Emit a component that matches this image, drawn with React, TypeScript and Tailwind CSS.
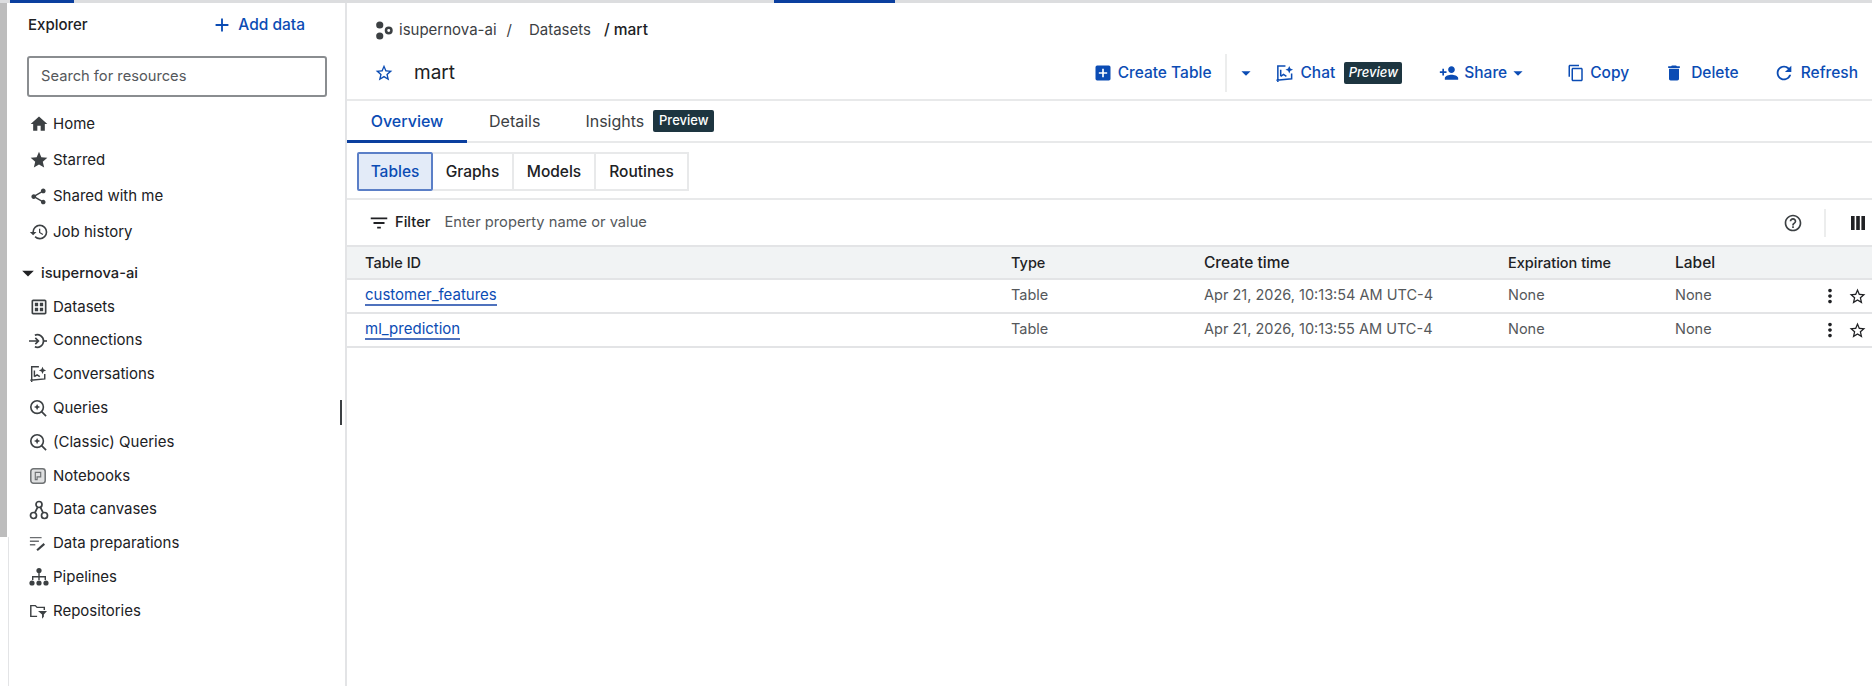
import {
    MdAdd,
    MdAddBox,
    MdArrowDropDown,
    MdContentCopy,
    MdDelete,
    MdFilterList,
    MdHelpOutline,
    MdHome,
    MdHistory,
    MdMoreVert,
    MdOutlineDataset,
    MdPersonAdd,
    MdRefresh,
    MdShare,
    MdStar,
    MdStarBorder,
} from "react-icons/md";
import type { ReactNode } from "react";

const FONT = "font-['Inter','Roboto','Liberation_Sans',sans-serif]";

function ConnectionsIcon() {
    return (
        <svg viewBox="0 0 20 20" className="h-[18px] w-[18px]" fill="none" stroke="currentColor" strokeWidth="1.8">
            <path d="M0 10h10M7 6.5l3.5 3.5L7 13.5" />
            <path d="M6.5 3.5a7 7 0 1 1 0 13" />
            <path d="M16 10h4" />
        </svg>
    );
}

function ConversationsIcon({ className = "h-[18px] w-[18px]" }: { className?: string }) {
    return (
        <svg viewBox="0 0 20 20" className={className} fill="none" stroke="currentColor" strokeWidth="1.6">
            <path d="M3 19V2h8M1.5 17l16-1.5V10M6 13V6M6 13l3-2 3 2" />
            <path d="M15 2l1.2 2.8L19 6l-2.8 1.2L15 10l-1.2-2.8L11 6l2.8-1.2z" fill="currentColor" stroke="none" />
        </svg>
    );
}

function QueryIcon() {
    return (
        <svg viewBox="0 0 20 20" className="h-[18px] w-[18px]" fill="none" stroke="currentColor" strokeWidth="1.8">
            <circle cx="9" cy="9" r="7" />
            <path d="M14 14l5 5" />
            <path d="M9 5.5l1.1 2.4L12.5 9l-2.4 1.1L9 12.5l-1.1-2.4L5.5 9l2.4-1.1z" fill="currentColor" stroke="none" />
        </svg>
    );
}

function NotebookIcon() {
    return (
        <svg viewBox="0 0 20 20" className="h-[18px] w-[18px] text-[#6f7274]" fill="none" stroke="currentColor" strokeWidth="1.7">
            <rect x="2" y="2" width="16" height="16" rx="3" fill="#dfe0e1" />
            <path d="M7 6h6v5H9v3H7z" strokeWidth="1.3" />
        </svg>
    );
}

function CanvasIcon() {
    return (
        <svg viewBox="0 0 20 20" className="h-[20px] w-[20px]" fill="none" stroke="currentColor" strokeWidth="1.7">
            <circle cx="10" cy="4.5" r="3" />
            <circle cx="4.5" cy="15.5" r="3" />
            <circle cx="15.5" cy="15.5" r="3" />
            <path d="M8.5 7.5L6 12.5M11.5 7.5l2.5 5" />
        </svg>
    );
}

function PreparationIcon() {
    return (
        <svg viewBox="0 0 20 20" className="h-[18px] w-[18px]" fill="none" stroke="currentColor" strokeWidth="1.6">
            <path d="M1 4h13M1 8h10M1 12h6" stroke="#6b6e71" />
            <path d="M9 18l8-7" strokeWidth="2.4" />
        </svg>
    );
}

function PipelineIcon() {
    return (
        <svg viewBox="0 0 20 20" className="h-[20px] w-[20px]" fill="currentColor">
            <circle cx="10" cy="3.5" r="2.6" />
            <circle cx="3" cy="16" r="2.6" />
            <circle cx="10" cy="16" r="2.6" />
            <circle cx="17" cy="16" r="2.6" />
            <path d="M9.3 5h1.4v4H17v4h-1.4v-2.6h-4.9V13H9.3v-2.6H4.4V13H3V9h6.3z" />
        </svg>
    );
}

function RepositoryIcon() {
    return (
        <svg viewBox="0 0 20 20" className="h-[18px] w-[18px]" fill="none" stroke="currentColor" strokeWidth="1.6">
            <path d="M9 16H2V4h5l2 2h8v3" />
            <path d="M10 10h10l-3.5 4v2.5l-2 2V14z" fill="currentColor" stroke="none" />
        </svg>
    );
}

function OrgIcon() {
    return (
        <svg viewBox="0 0 18 18" className="h-[19px] w-[19px] text-[#3c4043]" fill="currentColor">
            <circle cx="4.5" cy="3.8" r="3.4" />
            <circle cx="4.5" cy="14.2" r="3.4" />
            <path d="M13 5.2a3.8 3.8 0 1 0 0 7.6 3.8 3.8 0 0 0 0-7.6zm0 2.4a1.4 1.4 0 1 1 0 2.8 1.4 1.4 0 0 1 0-2.8z" />
        </svg>
    );
}

function ColumnsIcon() {
    return (
        <svg viewBox="0 0 14 14" className="h-[14px] w-[14px] text-[#202124]" fill="currentColor">
            <rect x="0" y="0" width="3.6" height="14" />
            <rect x="5.2" y="0" width="3.6" height="14" />
            <rect x="10.4" y="0" width="3.6" height="14" />
        </svg>
    );
}

function PreviewBadge({ className }: { className: string }) {
    return (
        <span className={`flex items-center justify-center rounded-[2px] bg-[#1d3540] text-[13px] font-medium text-white ${className}`}>
            Preview
        </span>
    );
}

function NavItem({ icon, label, h = "h-[33.8px]" }: { icon: ReactNode; label: string; h?: string }) {
    return (
        <div className={`flex items-center pl-[20px] text-[#202124] ${h}`}>
            <span className="flex w-[24px] shrink-0 items-center text-[#3c4043]">{icon}</span>
            <span className="text-[15px]">{label}</span>
        </div>
    );
}

function ActionButton({ icon, label, className }: { icon: ReactNode; label: string; className: string }) {
    return (
        <div className={`flex items-center text-[15.5px] font-medium text-[#0b4cb4] ${className}`}>
            {icon}
            <span>{label}</span>
        </div>
    );
}

const GRID = "grid grid-cols-[646px_193px_304px_167px_1fr_60px]";

function Row({ id, time }: { id: string; time: string }) {
    return (
        <div className={`${GRID} h-[34px] items-center border-b-2 border-[#e3e4e6] pb-[2px] pl-[18px] text-[14.5px] text-[#55585b]`}>
            <span>
                <span className="border-b-2 border-[#4f72bd] text-[15px] text-[#0b4cb4]">{id}</span>
            </span>
            <span>Table</span>
            <span>{time}</span>
            <span>None</span>
            <span>None</span>
            <span className="flex items-center justify-end gap-[7px] pr-[5px] pt-[2px] text-[#202124]">
                <MdMoreVert className="h-[22px] w-[22px]" />
                <MdStarBorder className="h-[19px] w-[19px]" />
            </span>
        </div>
    );
}

export default function App() {
    return (
        <div className={`${FONT} flex h-[686px] w-[1872px] flex-col overflow-hidden bg-white`}>
            {/* top strip with the two blue tab markers */}
            <div className="flex h-[3px] shrink-0 bg-[#dcdddf]">
                <div className="ml-[10px] w-[64px] bg-[#0b3f9f]" />
                <div className="ml-[700px] w-[121px] bg-[#0b3f9f]" />
            </div>

            <div className="flex min-h-0 flex-1">
                <div className="flex w-[9px] shrink-0 flex-col">
                    <div className="h-[534px] w-[7px] bg-[#bdbdbd]" />
                    <div className="flex-1 border-r border-[#e3e4e6]" />
                </div>

                <aside className="relative w-[338px] shrink-0 border-r-2 border-[#e3e4e6]">
                    <div className="flex h-[44px] items-center justify-between pl-[19px] pr-[40px]">
                        <span className="text-[15px] font-medium text-[#202124]">Explorer</span>
                        <span className="flex items-center text-[15.5px] font-medium text-[#0b4cb4]">
                            <MdAdd className="mr-[5px] h-[22px] w-[22px]" />
                            Add data
                        </span>
                    </div>
                    <div className="ml-[18px] mt-[9px] flex h-[41px] w-[300px] items-center rounded-[3px] border-2 border-[#8a8d90] pb-[1px] pl-[12px] text-[14.7px] text-[#55585b]">
                        Search for resources
                    </div>
                    <div className="mt-[9px]">
                        <NavItem h="h-[36px]" icon={<MdHome className="h-[20px] w-[20px]" />} label="Home" />
                        <NavItem h="h-[36px]" icon={<MdStar className="h-[20px] w-[20px]" />} label="Starred" />
                        <NavItem h="h-[36px]" icon={<MdShare className="h-[19px] w-[19px]" />} label="Shared with me" />
                        <NavItem h="h-[36px]" icon={<MdHistory className="h-[20px] w-[20px]" />} label="Job history" />
                    </div>
                    <div className="mt-[6px] flex h-[34px] items-center pl-[10px] text-[14.7px] font-medium text-[#202124]">
                        <MdArrowDropDown className="mr-[-1px] h-[28px] w-[28px] -ml-[5px]" />
                        isupernova-ai
                    </div>
                    <div>
                        <NavItem icon={<MdOutlineDataset className="h-[20px] w-[20px]" />} label="Datasets" />
                        <NavItem icon={<ConnectionsIcon />} label="Connections" />
                        <NavItem icon={<ConversationsIcon />} label="Conversations" />
                        <NavItem icon={<QueryIcon />} label="Queries" />
                        <NavItem icon={<QueryIcon />} label="(Classic) Queries" />
                        <NavItem icon={<NotebookIcon />} label="Notebooks" />
                        <NavItem icon={<CanvasIcon />} label="Data canvases" />
                        <NavItem icon={<PreparationIcon />} label="Data preparations" />
                        <NavItem icon={<PipelineIcon />} label="Pipelines" />
                        <NavItem icon={<RepositoryIcon />} label="Repositories" />
                    </div>
                    {/* resize handle */}
                    <div className="absolute right-[3px] top-[397px] h-[25px] w-[2px] bg-[#3c4043]" />
                </aside>

                <main className="min-w-0 flex-1">
                    <div className="flex h-[98px] flex-col border-b-2 border-[#e8e9ea]">
                        <div className="flex h-[54px] shrink-0 items-center pl-[28px] text-[15px] text-[#3c4043]">
                            <OrgIcon />
                            <span className="ml-[5px]">isupernova-ai</span>
                            <span className="ml-[10px]">/</span>
                            <span className="ml-[17px]">Datasets</span>
                            <span className="ml-[13px] text-[15.5px] font-medium text-[#202124]">/ mart</span>
                        </div>
                        <div className="flex flex-1 items-center pb-[10px]">
                            <MdStarBorder className="ml-[27px] h-[20px] w-[20px] text-[#0b4cb4]" />
                            <span className="ml-[20px] text-[19px] text-[#202124]">mart</span>
                            <div className="ml-auto flex items-center pr-[14px]">
                                <ActionButton icon={<MdAddBox className="mr-[5px] h-[20px] w-[20px]" />} label="Create Table" className="" />
                                <div className="-my-[4px] ml-[13px] h-[38px] w-[2px] bg-[#eceded]" />
                                <MdArrowDropDown className="ml-[8px] h-[22px] w-[22px] text-[#0b4cb4]" />
                                <ActionButton icon={<ConversationsIcon className="mr-[7px] h-[19px] w-[19px]" />} label="Chat" className="ml-[18px]" />
                                <PreviewBadge className="ml-[9px] h-[22px] w-[58px] italic" />
                                <ActionButton icon={<MdPersonAdd className="mr-[5px] h-[20px] w-[20px]" />} label="Share" className="ml-[37px]" />
                                <MdArrowDropDown className="h-[22px] w-[22px] text-[#0b4cb4]" />
                                <ActionButton icon={<MdContentCopy className="mr-[5px] h-[18px] w-[18px]" />} label="Copy" className="ml-[38px]" />
                                <ActionButton icon={<MdDelete className="mr-[7px] h-[20px] w-[20px]" />} label="Delete" className="ml-[35px]" />
                                <ActionButton icon={<MdRefresh className="mr-[6px] h-[22px] w-[22px]" />} label="Refresh" className="ml-[34px]" />
                            </div>
                        </div>
                    </div>

                    <div className="flex h-[42px] border-b-2 border-[#e8e9ea] text-[16px]">
                        <div className="flex h-[42px] w-[120px] items-center justify-center border-b-[3px] border-[#0b3f9f] font-medium text-[#0b4cb4]">
                            Overview
                        </div>
                        <div className="ml-[22px] flex items-center text-[#3c4043]">Details</div>
                        <div className="ml-[45px] flex items-center text-[#3c4043]">Insights</div>
                        <div className="flex items-center">
                            <PreviewBadge className="ml-[9px] h-[22px] w-[61px]" />
                        </div>
                    </div>

                    <div className="flex h-[57px] items-start border-b-2 border-[#e8e9ea] pl-[10px] pt-[9px] text-[15.5px] font-medium text-[#202124]">
                        <div className="flex h-[39px] w-[76px] items-center justify-center rounded-[2px] border-2 border-[#5b7fc7] bg-[#e3ebf8] text-[#0b4cb4]">Tables</div>
                        <div className="flex h-[39px] w-[81px] items-center justify-center border-y-2 border-r-2 border-[#e8e9ea]">Graphs</div>
                        <div className="flex h-[39px] w-[82px] items-center justify-center border-y-2 border-r-2 border-[#e8e9ea]">Models</div>
                        <div className="flex h-[39px] w-[93px] items-center justify-center border-y-2 border-r-2 border-[#e8e9ea]">Routines</div>
                    </div>

                    <div className="flex h-[45px] items-center pl-[21px] text-[14.7px]">
                        <MdFilterList className="mr-[5px] h-[22px] w-[22px] text-[#202124]" />
                        <span className="font-medium text-[#202124]">Filter</span>
                        <span className="ml-[14px] text-[#55585b]">Enter property name or value</span>
                        <MdHelpOutline className="ml-auto h-[20px] w-[20px] text-[#3c4043]" />
                        <div className="ml-[21px] h-[28px] w-[2px] bg-[#eceded]" />
                        <span className="ml-[25px] mr-[7px]">
                            <ColumnsIcon />
                        </span>
                    </div>

                    <div className={`${GRID} h-[35px] items-center border-y-2 border-[#e3e4e6] bg-[#f1f3f4] pl-[18px] text-[14.5px] font-medium text-[#202124]`}>
                        <span>Table ID</span>
                        <span>Type</span>
                        <span className="text-[15.5px]">Create time</span>
                        <span>Expiration time</span>
                        <span className="text-[15.5px]">Label</span>
                        <span />
                    </div>
                    <Row id="customer_features" time="Apr 21, 2026, 10:13:54 AM UTC-4" />
                    <Row id="ml_prediction" time="Apr 21, 2026, 10:13:55 AM UTC-4" />
                </main>
            </div>
        </div>
    );
}
